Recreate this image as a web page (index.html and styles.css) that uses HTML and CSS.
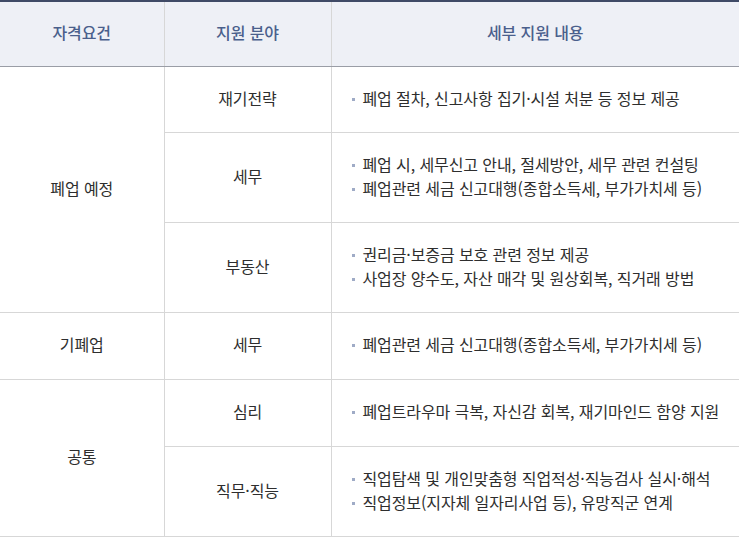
FILE: index.html
```html
<!DOCTYPE html>
<html lang="ko">
<head>
<meta charset="utf-8">
<link rel="stylesheet" href="styles.css">
</head>
<body>
<table class="tbl">
  <colgroup>
    <col class="c1"><col class="c2"><col class="c3">
  </colgroup>
  <thead>
    <tr class="h"><th>자격요건</th><th>지원 분야</th><th>세부 지원 내용</th></tr>
  </thead>
  <tbody>
    <tr class="r66">
      <td rowspan="3">폐업 예정</td>
      <td>재기전략</td>
      <td class="d"><ul><li>폐업 절차, 신고사항 집기·시설 처분 등 정보 제공</li></ul></td>
    </tr>
    <tr class="r90">
      <td>세무</td>
      <td class="d"><ul><li>폐업 시, 세무신고 안내, 절세방안, 세무 관련 컨설팅</li><li>폐업관련 세금 신고대행(종합소득세, 부가가치세 등)</li></ul></td>
    </tr>
    <tr class="r90">
      <td>부동산</td>
      <td class="d"><ul><li>권리금·보증금 보호 관련 정보 제공</li><li>사업장 양수도, 자산 매각 및 원상회복, 직거래 방법</li></ul></td>
    </tr>
    <tr class="r67">
      <td>기폐업</td>
      <td>세무</td>
      <td class="d"><ul><li>폐업관련 세금 신고대행(종합소득세, 부가가치세 등)</li></ul></td>
    </tr>
    <tr class="r67">
      <td rowspan="2">공통</td>
      <td>심리</td>
      <td class="d"><ul><li>폐업트라우마 극복, 자신감 회복, 재기마인드 함양 지원</li></ul></td>
    </tr>
    <tr class="r90">
      <td>직무·직능</td>
      <td class="d"><ul><li>직업탐색 및 개인맞춤형 직업적성·직능검사 실시·해석</li><li>직업정보(지자체 일자리사업 등), 유망직군 연계</li></ul></td>
    </tr>
  </tbody>
</table>
</body>
</html>
```
FILE: styles.css
```css
html, body { margin: 0; padding: 0; background: #fff; }
body { font-family: "Noto Sans CJK KR", "Noto Sans", sans-serif; color: #2e2e2e; }
.tbl {
  width: 739px;
  border-collapse: collapse;
  table-layout: fixed;
  border-top: 2px solid #3f4a66;
}
.c1 { width: 164px; }
.c2 { width: 167px; }
.c3 { width: 408px; }
.tbl th, .tbl td {
  padding: 0 0 4px 0;
  text-align: center;
  vertical-align: middle;
  font-size: 16px;
  font-weight: 400;
  letter-spacing: -0.1px;
  border: 1px solid #d7d7d7;
}
.tbl th:first-child, .tbl td:first-child { border-left: none; }
.tbl th:last-child, .tbl td:last-child { border-right: none; }
.h th {
  height: 60px;
  background: #eef0f6;
  color: #4a5f8c;
  font-weight: 500;
  border-bottom: 1px solid #9a9da6;
  border-top: none;
}
.r66 td { height: 61px; }
.r67 td { height: 62px; }
.r90 td { height: 85px; }
.tbl td.d { text-align: left; }
.d ul { list-style: none; margin: 0; padding: 0 0 0 20px; }
.d li { position: relative; padding-left: 11px; line-height: 24px; }
.d li::before {
  content: "";
  position: absolute;
  left: 0;
  top: 12px;
  width: 3px;
  height: 3px;
  background: #9fabc6;
}
```
